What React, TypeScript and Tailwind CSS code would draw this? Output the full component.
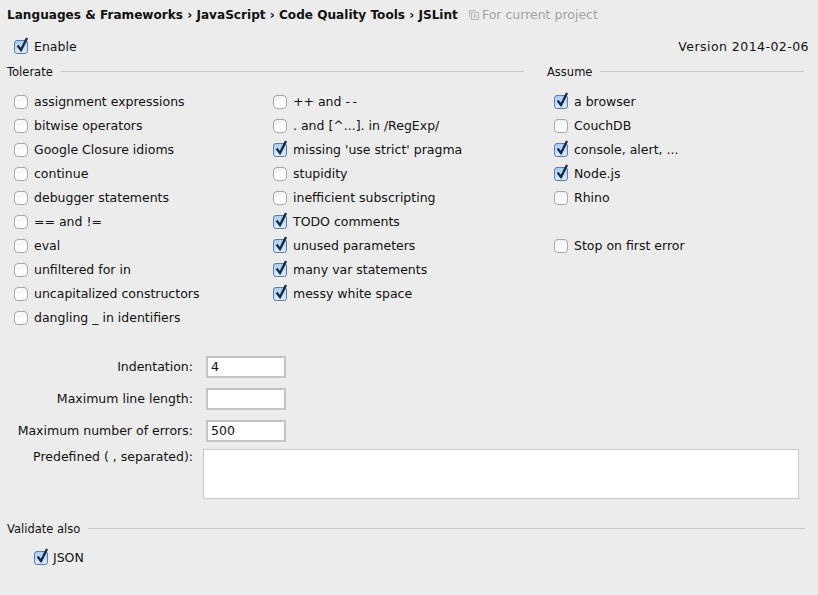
import type { ReactNode } from "react";

function Check({ on }: { on?: boolean }) {
  return (
    <span className="relative block w-[14px] h-[14px] shrink-0">
      {on ? (
        <span className="block w-[14px] h-[14px] rounded-[3px] border border-[#5f7aa8] bg-gradient-to-b from-[#a9cdf2] to-[#dcecfb]" />
      ) : (
        <span className="block w-[14px] h-[14px] rounded-[4px] border border-[#a9a9a9] bg-gradient-to-b from-[#f4f4f4] to-white" />
      )}
      {on && (
        <svg className="absolute left-[1px] top-[-4px]" width="15" height="17" viewBox="0 0 15 17" fill="none">
          <path d="M2.6 9.6 L6 14 L12 2" stroke="#1c2a44" strokeWidth="2.4" />
        </svg>
      )}
    </span>
  );
}

function Row({ label, on }: { label: ReactNode; on?: boolean }) {
  return (
    <div className="flex items-center h-[24px] gap-[6px] pl-[7px]">
      <Check on={on} />
      <span className="whitespace-pre">{label}</span>
    </div>
  );
}

function Sep({ title, className }: { title: string; className?: string }) {
  return (
    <div className={"flex items-center gap-[8px] h-[16px] " + (className ?? "")}>
      <span className="whitespace-pre text-[11.5px] mt-[1px]">{title}</span>
      <span className="flex-1 h-px mb-[2px] bg-[#c8c8c8]" />
    </div>
  );
}

function Field({ label, value }: { label: string; value?: string }) {
  return (
    <div className="flex items-center h-[32px]">
      <span className="w-[193px] text-right whitespace-pre">{label}</span>
      <span className="ml-[13px] w-[80px] h-[22px] border-2 border-[#c4c4c4] bg-white pl-[3px] leading-[18px]">{value}</span>
    </div>
  );
}

const col1: [string, boolean?][] = [
  ["assignment expressions"],
  ["bitwise operators"],
  ["Google Closure idioms"],
  ["continue"],
  ["debugger statements"],
  ["== and !="],
  ["eval"],
  ["unfiltered for in"],
  ["uncapitalized constructors"],
  ["dangling _ in identifiers"],
];
const col2: [string, boolean?][] = [
  [". and [^...]. in /RegExp/"],
  ["missing 'use strict' pragma", true],
  ["stupidity"],
  ["inefficient subscripting"],
  ["TODO comments", true],
  ["unused parameters", true],
  ["many var statements", true],
  ["messy white space", true],
];
const col3: [string, boolean?][] = [
  ["a browser", true],
  ["CouchDB"],
  ["console, alert, ...", true],
  ["Node.js", true],
  ["Rhino"],
];

export default function App() {
  return (
    <div className="w-[818px] h-[595px] overflow-hidden bg-[#ececec] text-[#111] text-[12.5px] font-['DejaVu_Sans',sans-serif] flex flex-col">
      <div className="flex items-center h-[16px] mt-[7px] pl-[7px] whitespace-pre">
        <span className="font-bold text-[#111] text-[12.1px]">Languages &amp; Frameworks › JavaScript › Code Quality Tools › JSLint</span>
        <svg className="ml-[11px] mr-[3px]" width="10" height="10" viewBox="0 0 10 10" fill="none" stroke="#b5b8ba">
          <path d="M0.5 7.5V0.5H7" />
          <rect x="2.5" y="2.5" width="7" height="7" />
          <path d="M4 5H8M4 7H8" />
        </svg>
        <span className="text-[#a3a3a3]">For current project</span>
      </div>
      <div className="flex items-center justify-between h-[24px] mt-[12px] pl-[14px] pr-[9px]">
        <div className="flex items-center gap-[6px]">
          <Check on />
          <span>Enable</span>
        </div>
        <span className="tracking-[0.45px]">Version 2014-02-06</span>
      </div>
      <div className="flex mt-[5px]">
        <div className="w-[517px] ml-[7px]">
          <Sep title="Tolerate" />
          <div className="flex mt-[10px] w-[540px]">
            <div className="w-[259px]">
              {col1.map(([l, o]) => <Row key={l} label={l} on={o} />)}
            </div>
            <div className="flex-1">
              <Row label={<>++ and <span className="tracking-[2.5px]">--</span></>} />
              {col2.map(([l, o]) => <Row key={l} label={l} on={o} />)}
            </div>
          </div>
        </div>
        <div className="w-[257px] ml-[23px]">
          <Sep title="Assume" />
          <div className="mt-[10px]">
            {col3.map(([l, o]) => <Row key={l} label={l} on={o} />)}
            <div className="mt-[24px]"><Row label="Stop on first error" /></div>
          </div>
        </div>
      </div>
      <div className="mt-[21px]">
        <Field label="Indentation:" value="4" />
        <Field label="Maximum line length:" />
        <Field label="Maximum number of errors:" value="500" />
        <div className="flex h-[50px] mt-[2px]">
          <span className="w-[193px] text-right whitespace-pre leading-[16px]">Predefined ( , separated):</span>
          <span className="ml-[10px] w-[596px] h-[50px] border border-[#c8c8c8] bg-white" />
        </div>
      </div>
      <Sep title="Validate also" className="mt-[22px] ml-[7px] mr-[13px]" />
      <div className="flex items-center h-[24px] gap-[5px] pl-[34px] mt-[9px]">
        <Check on />
        <span>JSON</span>
      </div>
    </div>
  );
}
